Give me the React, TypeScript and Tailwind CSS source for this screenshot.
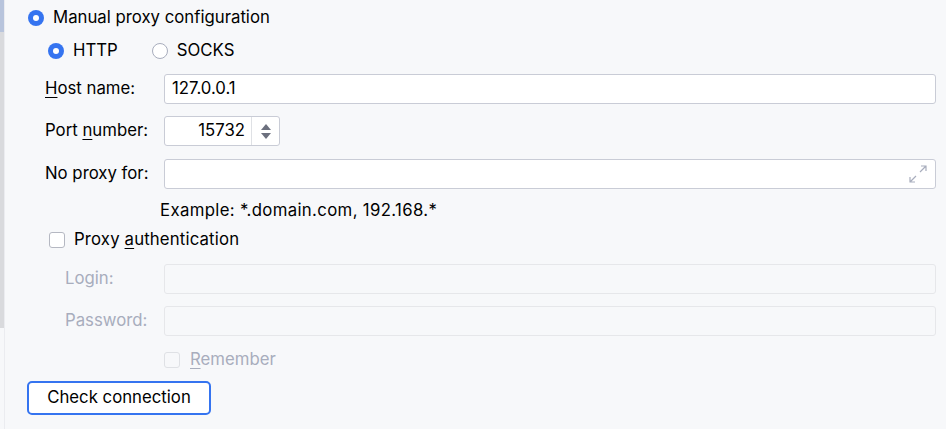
import React from 'react';

const font = "font-['Inter','Noto_Sans',sans-serif]";

function Radio({ checked }: { checked: boolean }) {
  return checked ? (
    <span className="flex h-4 w-4 items-center justify-center rounded-full bg-[#3574f0]">
      <span className="h-1.5 w-1.5 rounded-full bg-white" />
    </span>
  ) : (
    <span className="h-4 w-4 rounded-full border border-[#a8adbd] bg-white" />
  );
}

function Mn({ children }: { children: React.ReactNode }) {
  return <span className="underline decoration-1 underline-offset-[3px]">{children}</span>;
}

function ExpandIcon() {
  return (
    <svg width="20" height="20" viewBox="0 0 20 20" fill="none" stroke="#a8adbd" strokeWidth="1.2">
      <path d="M12 8L18 2M13 2h5v5" />
      <path d="M8 12L2 18M2 13v5h5" />
    </svg>
  );
}

function Field({ children, disabled }: { children?: React.ReactNode; disabled?: boolean }) {
  return (
    <div
      className={`flex h-[30px] flex-1 items-center rounded-[3px] border px-[7px] ${
        disabled ? 'border-[#e6e7ea] bg-[#f7f8fa]' : 'border-[#c9ccd6] bg-white'
      }`}
    >
      {children}
    </div>
  );
}

export default function App() {
  return (
    <div className={`flex h-[429px] w-[946px] bg-[#f7f8fa] text-[16.75px] text-black ${font}`}>
      <div className="flex w-[4px] flex-col">
        <div className="h-[32px] bg-[#b8c4dc]" />
        <div className="h-[296px] bg-[#d9dadd]" />
      </div>
      <div className="w-px bg-[#ebecf0]" />
      <div className="flex flex-1 flex-col pt-[1px] pr-[10px]">
        <div className="flex h-[34px] items-center gap-[9px] pl-[23px]">
          <Radio checked />
          <span>Manual proxy configuration</span>
        </div>
        <div className="flex h-[32px] items-center pl-[43px]">
          <div className="flex items-center gap-[9px]">
            <Radio checked />
            <span>HTTP</span>
          </div>
          <div className="ml-[34px] flex items-center gap-[9px]">
            <Radio checked={false} />
            <span>SOCKS</span>
          </div>
        </div>

        <div className="mt-[7px] flex h-[30px] items-center pl-[40px]">
          <span className="w-[119px]">
            <Mn>H</Mn>ost name:
          </span>
          <Field>127.0.0.1</Field>
        </div>

        <div className="mt-[12px] flex h-[30px] items-center pl-[40px]">
          <span className="w-[119px]">
            Port <Mn>n</Mn>umber:
          </span>
          <div className="flex h-[30px] w-[116px] items-stretch rounded-[3px] border border-[#c9ccd6] bg-white">
            <div className="flex flex-1 items-center justify-end pr-[6px]">15732</div>
            <div className="flex w-[28px] flex-col items-center justify-center gap-[3px] border-l border-[#dfe1e5]">
              <svg width="10" height="6" viewBox="0 0 10 6"><path d="M5 0L10 6H0z" fill="#6c707e" /></svg>
              <svg width="10" height="6" viewBox="0 0 10 6"><path d="M0 0h10L5 6z" fill="#6c707e" /></svg>
            </div>
          </div>
        </div>

        <div className="mt-[13px] flex h-[30px] items-center pl-[40px]">
          <span className="w-[119px]">No proxy for:</span>
          <Field>
            <span className="flex-1" />
            <ExpandIcon />
          </Field>
        </div>

        <div className="mt-[9px] flex h-[26px] items-center pl-[155px] tracking-[0.35px]">
          Example: *.domain.com, 192.168.*
        </div>

        <div className="mt-[4px] flex h-[24px] items-center gap-[9px] pl-[44px]">
          <span className="h-4 w-4 rounded-[3px] border border-[#b5b8c2] bg-white" />
          <span className="tracking-[0.15px]">
            Proxy <Mn>a</Mn>uthentication
          </span>
        </div>

        <div className="mt-[12px] flex h-[30px] items-center pl-[60px] text-[#a8adbd]">
          <span className="w-[99px]">Login:</span>
          <Field disabled />
        </div>

        <div className="mt-[12px] flex h-[30px] items-center pl-[60px] text-[#a8adbd]">
          <span className="w-[99px]">Password:</span>
          <Field disabled />
        </div>

        <div className="mt-[16px] flex h-[16px] items-center gap-[10px] pl-[159px] text-[#a8adbd]">
          <span className="h-4 w-4 rounded-[3px] border border-[#dfe1e5] bg-[#f7f8fa]" />
          <span>
            <Mn>R</Mn>emember
          </span>
        </div>

        <div className="mt-[13px] pl-[22px]">
          <button className="flex h-[34px] w-[184px] items-center justify-center rounded-[5px] border-2 border-[#3574f0] bg-white">
            Check connection
          </button>
        </div>
      </div>
    </div>
  );
}
